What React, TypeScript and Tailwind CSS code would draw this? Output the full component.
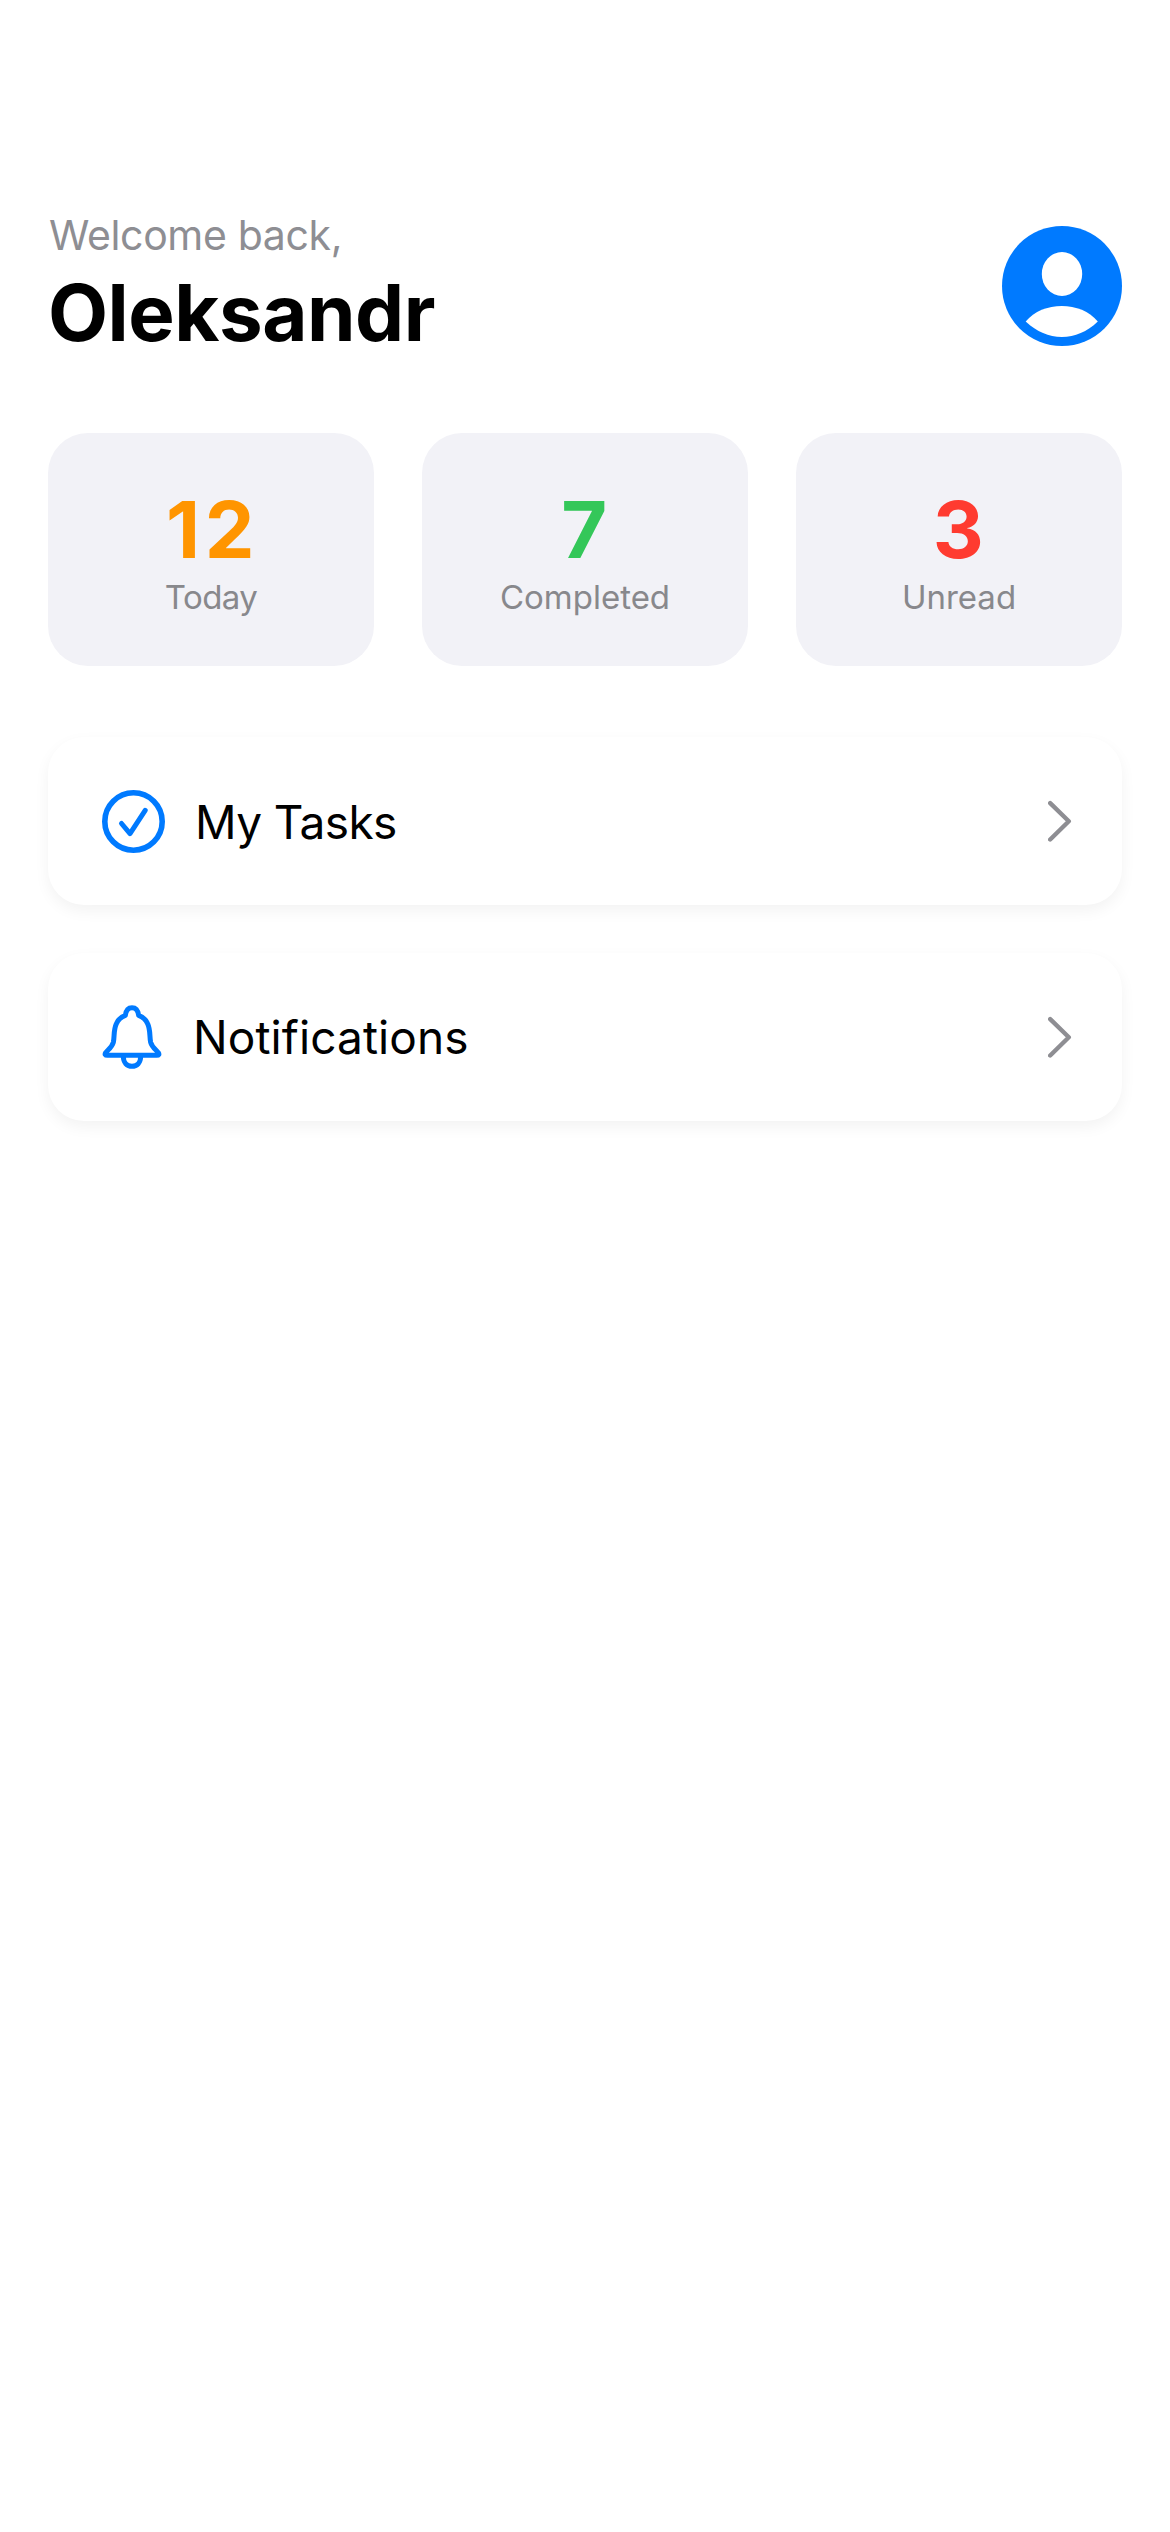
import React from "react";

function Avatar() {
  return (
    <svg viewBox="0 0 120 120" className="h-[120px] w-[120px] shrink-0">
      <circle cx="60" cy="60" r="60" fill="#007aff" />
      <ellipse cx="60" cy="48" rx="20.2" ry="22" fill="#fff" />
      <path
        d="M23.7 95.6C32 85 46 80 59.8 80s27.7 5 36 15.6C85 106 73 111 59.8 111S35 106 23.7 95.6Z"
        fill="#fff"
      />
    </svg>
  );
}

function CheckCircleIcon() {
  return (
    <svg viewBox="0 0 63 63" fill="none" stroke="#007aff" strokeLinecap="round" strokeLinejoin="round" className="h-[63px] w-[63px]">
      <circle cx="31.5" cy="31.5" r="28.7" strokeWidth="5.6" />
      <path d="M19.5 33.5 28 43.6 43.2 20.4" strokeWidth="5" />
    </svg>
  );
}

function BellIcon() {
  return (
    <svg viewBox="36 27 180 198" fill="none" stroke="#007aff" strokeWidth="15" strokeLinejoin="round" className="h-[66px] w-[60px]">
      <path d="M52 181Q42 181 47 173C54 164 66 157 70 142 74 124 70 106 79 86 84 74 93 66 106 61 108 46 115 38 126 38 137 38 144 46 146 61 159 66 168 74 173 86 182 106 178 124 182 142 186 157 198 164 205 173Q210 181 200 181Z" />
      <path d="M100 184C100 203 111 214 126 214 141 214 152 203 152 184" />
    </svg>
  );
}

function Chevron() {
  return (
    <svg viewBox="0 0 24 42" fill="none" stroke="#8e8e93" strokeWidth="4.4" strokeLinecap="round" strokeLinejoin="round" className="h-[42px] w-[24px]">
      <path d="M2.2 3.1 20.8 21.3 2.2 39.5" />
    </svg>
  );
}

const stats = [
  { value: "12", label: "Today", color: "text-[#ff9500]", labelStyle: "tracking-[-0.6px]" },
  { value: "7", label: "Completed", color: "text-[#34c759]", labelStyle: "tracking-normal" },
  { value: "3", label: "Unread", color: "text-[#ff3b30]", labelStyle: "tracking-normal" },
];

const links = [
  { label: "My Tasks", Icon: CheckCircleIcon, labelStyle: "pt-0.5 tracking-[-0.6px]" },
  { label: "Notifications", Icon: BellIcon, labelStyle: "pl-px tracking-[0.1px]" },
];

export default function App() {
  return (
    <div className="min-h-screen bg-white px-12 pt-[210px] font-['Inter',sans-serif]">
      <header className="flex h-[152px] items-center justify-between">
        <div className="flex h-full flex-col">
          <p className="pl-px text-[41px] leading-[50px] tracking-[-0.36px] text-[#8e8e93]">Welcome back,</p>
          <h1 className="mt-[5px] text-[78px] leading-[96px] font-bold tracking-[-0.5px] text-black">Oleksandr</h1>
        </div>
        <Avatar />
      </header>

      <section className="mt-[71px] grid grid-cols-3 gap-12">
        {stats.map((s) => (
          <div key={s.label} className="flex h-[233px] flex-col items-center rounded-[40px] bg-[#f2f2f7] pt-12">
            <span className={`pl-[3px] text-[79px] leading-[96px] font-bold tracking-[4.5px] ${s.color}`}>{s.value}</span>
            <span className={`text-[33px] leading-10 text-[#88888c] ${s.labelStyle}`}>{s.label}</span>
          </div>
        ))}
      </section>

      <nav className="mt-[71px] flex flex-col gap-12">
        {links.map(({ label, Icon, labelStyle }) => (
          <a
            key={label}
            className="flex h-[168px] items-center gap-[30px] rounded-[36px] bg-white pr-[50px] pl-[54px] shadow-[0_6px_15px_rgba(0,0,0,0.05)]"
          >
            <Icon />
            <span className={`flex-1 text-[46px] leading-[60px] text-black ${labelStyle}`}>{label}</span>
            <Chevron />
          </a>
        ))}
      </nav>
    </div>
  );
}
